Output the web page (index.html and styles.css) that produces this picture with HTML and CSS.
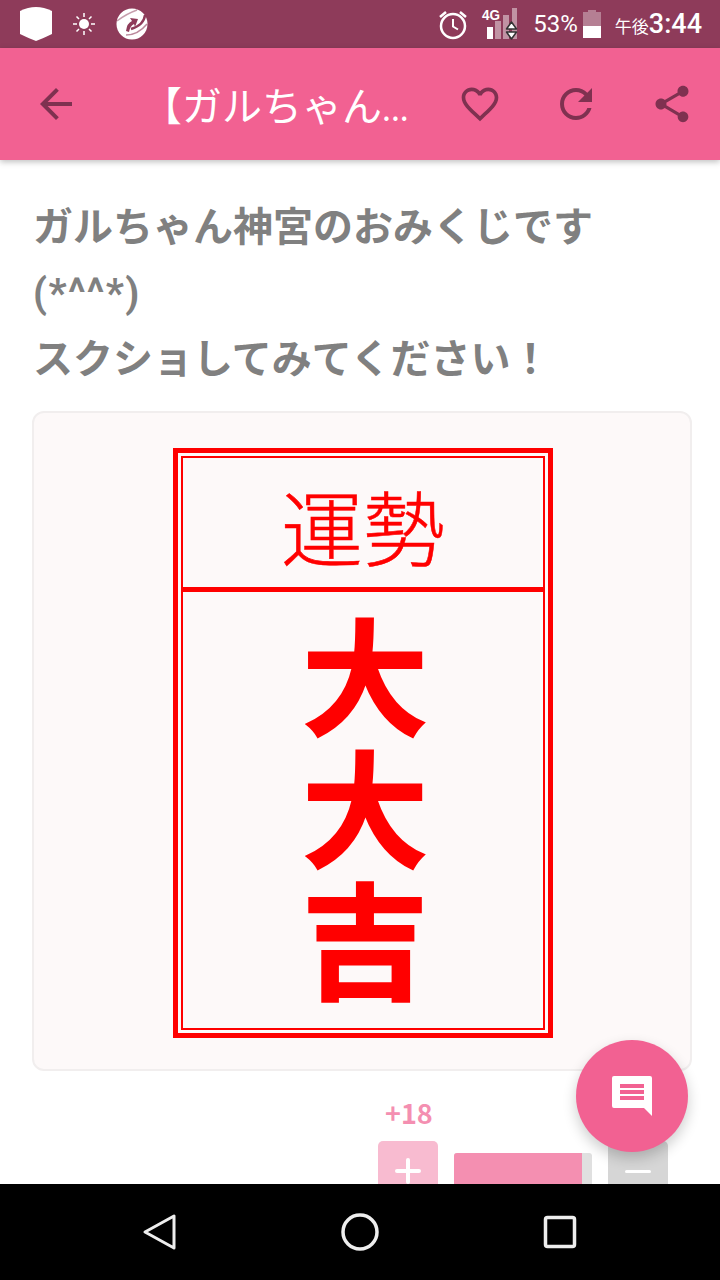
FILE: index.html
```html
<!DOCTYPE html>
<html lang="ja">
<head>
    <meta charset="UTF-8">
    <meta name="viewport" content="width=device-width, initial-scale=1.0">
    <title>ガルちゃん神宮のおみくじ</title>
    <link rel="stylesheet" href="styles.css">
</head>
<body>

<div class="app">
    <div class="status-bar">
        <div class="status-left">
            <svg class="st-shield" viewBox="0 0 32 34"><path d="M0 4Q8 0 16 0T32 4V27Q24 31 16 34 8 31 0 27Z" fill="#fff"/></svg>
            <svg class="st-sun" viewBox="0 0 24 24">
                <circle cx="12" cy="12" r="5" fill="#fff"/>
                <path d="M12 1v4M12 19v4M1 12h4M19 12h4M4.5 4.5l2.500 2.500M17 17l2.500 2.500M4.500 19.500L7 17M17 7l2.500-2.500" stroke="#fff" stroke-width="1.500" fill="none"/>
            </svg>
            <svg class="st-trend" viewBox="0 0 32 32">
                <circle cx="16" cy="16" r="15.500" fill="#fff"/>
                <path d="M1 13Q10 6 21 2" stroke="#8e3b5a" stroke-width="1.500" fill="none" opacity=".5"/>
                <path d="M29 7Q28 17 15 21" stroke="#8e3b5a" stroke-width="2.500" fill="none"/>
                <path d="M10 27Q22 27 31 16" stroke="#8e3b5a" stroke-width="1.500" fill="none" opacity=".6"/>
                <path d="M10 23Q11 15 16 13L14 10 22 11 19 19 18 16Q14 18 13 24Z" fill="#8e3b5a"/>
            </svg>
        </div>
        <div class="status-right">
            <svg class="st-alarm" viewBox="0 0 28 30">
                <circle cx="14" cy="16" r="12" stroke="#fff" stroke-width="2.500" fill="none"/>
                <path d="M14 9v7.500l5 3" stroke="#fff" stroke-width="2" fill="none"/>
                <path d="M1 7L7 2M27 7L21 2" stroke="#fff" stroke-width="2.500" fill="none"/>
            </svg>
            <svg class="st-signal" viewBox="0 0 36 34">
                <text class="st-4g" x="0" y="13" textLength="18" lengthAdjust="spacingAndGlyphs">4G</text>
                <rect x="5" y="20" width="6" height="12" fill="#fff"/>
                <rect x="13" y="14" width="6" height="18" fill="#fff" fill-opacity=".45"/>
                <rect x="21" y="8" width="6" height="24" fill="#fff" fill-opacity=".45"/>
                <rect x="30" y="1" width="5" height="31" fill="#fff" fill-opacity=".45"/>
                <path d="M24.500 22l5-7 5 7ZM24.500 25l5 7 5-7Z" fill="#fff" stroke="#333" stroke-width="1.500" stroke-linejoin="round"/>
            </svg>
            <span class="st-percent">53%</span>
            <svg class="st-battery" viewBox="0 0 18 28">
                <path d="M5 0h8v2h5v26H0V2h5Z" fill="#fff" fill-opacity=".35"/>
                <rect y="16" width="18" height="12" fill="#fff"/>
            </svg>
            <span class="st-time"><small>午後</small>3:44</span>
        </div>
    </div>

    <header class="toolbar">
        <button class="tool-btn back-btn">
            <svg viewBox="0 0 24 24"><path d="M20 11H7.830l5.590-5.590L12 4l-8 8 8 8 1.410-1.410L7.830 13H20z"/></svg>
        </button>
        <div class="toolbar-title">【ガルちゃん<span class="title-dots">...</span></div>
        <button class="tool-btn">
            <svg class="icon-sm" viewBox="0 0 24 24"><path d="M16.500 3c-1.740 0-3.410.81-4.500 2.090C10.910 3.810 9.240 3 7.500 3 4.420 3 2 5.420 2 8.500c0 3.780 3.400 6.860 8.550 11.540L12 21.350l1.450-1.320C18.600 15.360 22 12.280 22 8.500 22 5.420 19.580 3 16.500 3zm-4.400 15.550l-.1.100-.1-.1C7.140 14.240 4 11.390 4 8.500 4 6.500 5.500 5 7.500 5c1.540 0 3.040.99 3.570 2.360h1.870C13.460 5.990 14.960 5 16.500 5c2 0 3.500 1.500 3.500 3.500 0 2.890-3.140 5.740-7.900 10.050z"/></svg>
        </button>
        <button class="tool-btn">
            <svg viewBox="0 0 24 24"><path d="M17.650 6.350C16.200 4.900 14.210 4 12 4c-4.420 0-7.990 3.580-7.990 8s3.570 8 7.990 8c3.730 0 6.840-2.550 7.730-6h-2.080c-.82 2.330-3.040 4-5.650 4-3.310 0-6-2.690-6-6s2.690-6 6-6c1.660 0 3.140.69 4.220 1.780L13 11h7V4l-2.350 2.350z"/></svg>
        </button>
        <button class="tool-btn">
            <svg class="icon-sm" viewBox="0 0 24 24"><path d="M18 16.080c-.76 0-1.440.3-1.960.77L8.910 12.700c.05-.23.090-.46.090-.7s-.04-.47-.09-.7l7.050-4.110c.54.5 1.250.81 2.040.81 1.660 0 3-1.340 3-3s-1.340-3-3-3-3 1.340-3 3c0 .24.040.47.090.7L8.040 9.810C7.500 9.310 6.790 9 6 9c-1.660 0-3 1.340-3 3s1.340 3 3 3c.79 0 1.500-.31 2.040-.81l7.120 4.160c-.05.21-.08.43-.08.65 0 1.610 1.310 2.920 2.920 2.920s2.920-1.310 2.920-2.920-1.310-2.920-2.920-2.920z"/></svg>
        </button>
    </header>

    <main class="content">
        <p class="post-text">ガルちゃん神宮のおみくじです<br><span class="kaomoji">(*^^*)</span><br>スクショしてみてください！</p>

        <div class="post-image">
            <div class="slip">
                <div class="slip-inner">
                    <div class="slip-head">運勢</div>
                    <div class="slip-body">
                        <div class="slip-char">大</div>
                        <div class="slip-char">大</div>
                        <div class="slip-char">吉</div>
                    </div>
                </div>
            </div>
        </div>

        <div class="vote">
            <div class="vote-count">+18</div>
            <div class="vote-row">
                <div class="vote-btn plus"><span class="vote-h"></span><span class="vote-v"></span></div>
                <div class="vote-bar"><div class="vote-fill" style="width: 93%"></div></div>
                <div class="vote-btn minus"><span class="vote-h"></span></div>
            </div>
        </div>
    </main>

    <div class="fab">
        <svg viewBox="0 0 40 40"><path d="M2 0h36a2 2 0 0 1 2 2v38l-8-8H2a2 2 0 0 1-2-2V2a2 2 0 0 1 2-2Z" fill="#fff"/><path d="M8 8h24v4H8zM8 14h24v4H8zM8 20h24v4H8z" fill="#f26192"/></svg>
    </div>

    <nav class="nav-bar">
        <svg class="nav-icon" viewBox="0 0 40 40"><path d="M34 4V36L5 20Z" fill="none" stroke="#eee" stroke-width="3" stroke-linejoin="round"/></svg>
        <svg class="nav-icon" viewBox="0 0 40 40"><circle cx="20" cy="20" r="17" fill="none" stroke="#eee" stroke-width="3.500"/></svg>
        <svg class="nav-icon" viewBox="0 0 40 40"><rect x="5.500" y="5.500" width="29" height="29" rx="2" fill="none" stroke="#eee" stroke-width="3.500"/></svg>
    </nav>
</div>

</body>
</html>
```

FILE: styles.css
```css
* {
    margin: 0;
    padding: 0;
    box-sizing: border-box;
}

body {
    font-family: "Noto Sans CJK JP", "Noto Sans", sans-serif;
    background: white;
}

.app {
    position: relative;
    display: flex;
    flex-direction: column;
    width: 720px;
    height: 1280px;
    overflow: hidden;
}

/* status bar */
.status-bar {
    display: flex;
    justify-content: space-between;
    align-items: center;
    height: 48px;
    padding: 0 18px 0 20px;
    background: #8e3b5a;
    color: white;
    flex-shrink: 0;
}

.status-left,
.status-right {
    display: flex;
    align-items: center;
}

.st-shield {
    width: 32px;
    height: 34px;
}

.st-sun {
    width: 24px;
    height: 24px;
    margin-left: 20px;
}

.st-trend {
    width: 32px;
    height: 32px;
    margin-left: 20px;
}

.st-alarm {
    width: 28px;
    height: 30px;
    margin-top: 2px;
}

.st-signal {
    width: 36px;
    height: 34px;
    margin-left: 15px;
    overflow: visible;
}

.st-4g {
    font-family: "Liberation Sans", sans-serif;
    font-size: 15px;
    font-weight: 700;
    fill: white;
}

.st-percent {
    margin-left: 15px;
    font-family: Roboto, sans-serif;
    font-size: 24px;
}

.st-battery {
    width: 18px;
    height: 28px;
    margin-left: 5px;
}

.st-time {
    margin-left: 14px;
    font-family: Roboto, sans-serif;
    font-size: 27px;
    font-weight: 500;
}

.st-time small {
    font-family: "Noto Sans CJK JP", sans-serif;
    font-size: 17px;
    font-weight: 400;
}

/* toolbar */
.toolbar {
    position: relative;
    display: flex;
    align-items: center;
    height: 112px;
    background: #f26192;
    box-shadow: 0 2px 6px rgba(0, 0, 0, 0.25);
    flex-shrink: 0;
}

.tool-btn {
    display: flex;
    justify-content: center;
    align-items: center;
    width: 96px;
    height: 96px;
    border: none;
    background: none;
    flex-shrink: 0;
}

.tool-btn svg {
    width: 48px;
    height: 48px;
    fill: #7f3150;
}

.tool-btn svg.icon-sm {
    width: 44px;
    height: 44px;
}

.back-btn {
    margin-left: 8px;
}

.toolbar-title {
    flex: 1;
    min-width: 0;
    margin: 0 18px 0 38px;
    color: white;
    font-size: 40px;
    white-space: nowrap;
}

.title-dots {
    font-size: 32px;
}

/* post */
.content {
    flex: 1;
    min-height: 0;
    overflow: hidden;
    padding: 35px 28px 0 32px;
}

.post-text {
    padding-left: 1px;
    color: #808080;
    font-family: Roboto, "Noto Sans CJK JP", sans-serif;
    font-size: 40px;
    font-weight: 700;
    line-height: 66px;
}

.kaomoji {
    letter-spacing: 1.4px;
}

.post-image {
    display: flex;
    justify-content: center;
    align-items: center;
    height: 660px;
    margin-top: 18px;
    padding: 4px 0 0 2px;
    background: #fdf9f9;
    border: 2px solid #f1eeee;
    border-radius: 12px;
}

.slip {
    width: 380px;
    height: 590px;
    padding: 3px;
    border: 5px solid red;
}

.slip-inner {
    display: flex;
    flex-direction: column;
    height: 100%;
    border: 2px solid red;
    color: red;
}

.slip-head {
    display: flex;
    justify-content: center;
    align-items: center;
    height: 134px;
    padding-top: 4px;
    border-bottom: 5px solid red;
    font-size: 82px;
    font-weight: 300;
    line-height: 1;
    -webkit-text-stroke: 0.5px red;
}

.slip-body {
    flex: 1;
    padding: 13px 0 0 4px;
    text-align: center;
    font-size: 126px;
    font-weight: 700;
    -webkit-text-stroke: 2px red;
}

.slip-char {
    height: 132px;
    line-height: 132px;
}

/* vote */
.vote {
    margin-top: 24px;
}

.vote-count {
    margin-left: 353px;
    color: #f48fb1;
    font-size: 27px;
    font-weight: 700;
    line-height: 36px;
}

.vote-row {
    display: flex;
    align-items: flex-start;
    gap: 16px;
    margin-top: 10px;
    margin-left: 346px;
}

.vote-btn {
    position: relative;
    width: 60px;
    height: 60px;
    border-radius: 5px;
    flex-shrink: 0;
}

.plus {
    background: #f8bbd0;
}

.minus {
    background: #d6d6d6;
}

.vote-h,
.vote-v {
    position: absolute;
    background: white;
    border-radius: 2px;
}

.vote-h {
    left: 17px;
    top: 28px;
    width: 26px;
    height: 4px;
}

.minus .vote-h {
    height: 3px;
    top: 29px;
}

.vote-v {
    left: 28px;
    top: 17px;
    width: 4px;
    height: 26px;
}

.vote-bar {
    width: 138px;
    height: 40px;
    margin-top: 12px;
    background: #e0e0e0;
    border-radius: 3px;
    overflow: hidden;
}

.vote-fill {
    height: 100%;
    background: #f48fb1;
}

/* floating button */
.fab {
    position: absolute;
    left: 576px;
    top: 1040px;
    display: flex;
    justify-content: center;
    align-items: center;
    width: 112px;
    height: 112px;
    background: #f26192;
    border-radius: 50%;
    box-shadow: 0 6px 14px rgba(0, 0, 0, 0.2);
}

.fab svg {
    width: 40px;
    height: 40px;
}

/* nav bar */
.nav-bar {
    display: flex;
    justify-content: space-between;
    align-items: center;
    height: 96px;
    padding: 0 140px;
    background: black;
    flex-shrink: 0;
}

.nav-icon {
    width: 40px;
    height: 40px;
}
```
